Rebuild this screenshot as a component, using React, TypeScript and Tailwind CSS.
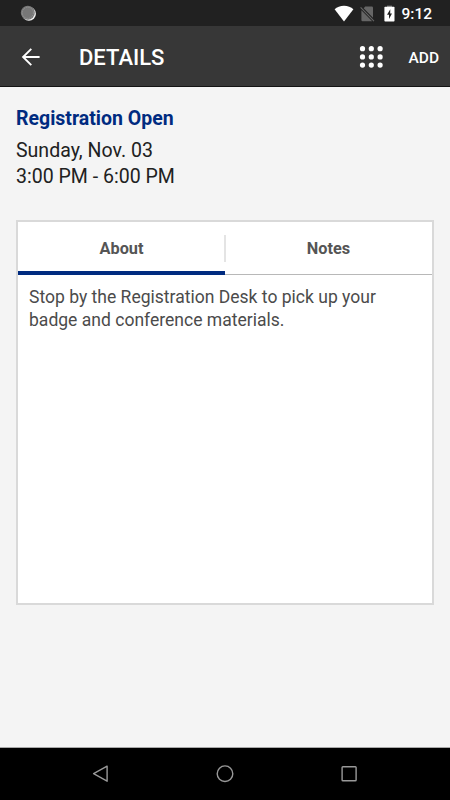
import { useState } from "react"
import clsx from "clsx"

const tabs = ["About", "Notes"];

const StatusBar = () => (
  <div className="flex h-[26px] shrink-0 items-center bg-[#212121] pl-[20px] pr-[18px] text-white">
    <svg width="17" height="17" viewBox="0 0 17 17">
      <circle cx="8.9" cy="8.8" r="7" fill="#f2f2f2" />
      <circle cx="7.8" cy="7.8" r="7" fill="#777777" />
      <circle cx="7.8" cy="7.8" r="5.6" fill="none" stroke="#a0a0a0" strokeWidth="1" strokeDasharray="1 1.2" />
    </svg>
    <div className="ml-auto flex items-center">
      <svg width="20" height="17" viewBox="0 0 20 17" className="mr-[6px]">
        <path d="M10 16.4 0.6 4.2C3 2 6.3 0.7 10 0.7S17 2 19.4 4.2Z" fill="#fff" />
      </svg>
      <svg width="15" height="17" viewBox="0 0 15 17" className="mr-[9px]">
        <path d="M5.2 1.6H11.9Q13 1.6 13 2.7V12.7L3.7 3.2ZM1.4 5.2 12.2 16.2H2.6Q1.4 16.2 1.4 15Z" fill="#666" />
        <path d="M0.6 2.3 14 16.1" stroke="#666" strokeWidth="1.1" />
      </svg>
      <svg width="11" height="17" viewBox="0 0 11 17" className="mr-[6px]">
        <path d="M3 0.6H8V2H3Z" fill="#777" />
        <path d="M1.2 1.8H9.8Q10.5 1.8 10.5 2.6V15.7Q10.5 16.5 9.8 16.5H1.2Q0.4 16.5 0.4 15.7V2.6Q0.4 1.8 1.2 1.8Z" fill="#fff" />
        <path d="M6.3 4.2 3 9.8H5V14L8 8.5H6.2Z" fill="#212121" />
      </svg>
      <span className="mt-[2px] whitespace-nowrap text-[15.5px] leading-5 font-medium">9:12</span>
    </div>
  </div>
);

const AppBar = () => (
  <header className="flex h-[61px] shrink-0 items-center border-b border-[#141414] bg-[#373737] pl-[21px] pr-[11px] text-white">
    <button type="button" aria-label="Back">
      <svg width="20" height="20" viewBox="0 0 20 20" fill="none" stroke="#fff" strokeWidth="1.9" className="block">
        <path d="M10.3 2.9 2.1 11 10.3 19.1M2.1 11H18.6" />
      </svg>
    </button>
    <h1 className="ml-[38px] mt-[4px] whitespace-nowrap text-[22px] leading-7 font-medium">DETAILS</h1>
    <button type="button" aria-label="Menu" className="ml-auto mr-[25px]">
      <svg width="24" height="24" viewBox="0 0 24 24" fill="#fff" className="block">
        {[4.7, 12.9, 21.1].map((y) =>
          [3.5, 12.3, 21.1].map((x) => <circle key={`${x}-${y}`} cx={x} cy={y} r="2.6" />)
        )}
      </svg>
    </button>
    <button type="button" className="mt-[3px] text-[15.5px] leading-5 font-medium">ADD</button>
  </header>
);

const NavBar = () => (
  <nav className="flex h-[53px] shrink-0 items-center justify-between border-t border-[#a8a8a8] bg-black pl-[92px] pr-[92px]">
    <svg width="18" height="18" viewBox="0 0 18 18" fill="none" stroke="#999" strokeWidth="1.4" strokeLinejoin="round">
      <path d="M15.1 1.2V16.2L1.6 8.7Z" />
    </svg>
    <svg width="18" height="18" viewBox="0 0 18 18" fill="none" stroke="#999" strokeWidth="1.4">
      <circle cx="9" cy="8.7" r="7.8" />
    </svg>
    <svg width="18" height="18" viewBox="0 0 18 18" fill="none" stroke="#999" strokeWidth="1.4">
      <rect x="2.1" y="1.8" width="14" height="14" rx="0.8" />
    </svg>
  </nav>
);

const App = () => {
  const [activeTab, setActiveTab] = useState("About");

  return (
    <div className="flex h-[800px] w-[450px] flex-col overflow-hidden bg-[#f4f4f4] font-['Roboto',sans-serif]">
      <StatusBar />
      <AppBar />

      <main className="flex-1 px-4 pt-[19px]">
        <h2 className="whitespace-nowrap text-[19.5px] leading-[26px] font-bold text-[#002b80]">Registration Open</h2>
        <div className="mt-[6px] whitespace-nowrap text-[19.55px] leading-[26px] text-[#212121]">
          <p>Sunday, Nov. 03</p>
          <p>3:00 PM - 6:00 PM</p>
        </div>

        <section className="mt-[30px] h-[385px] border-2 border-[#d9d9d9] bg-white">
          {/* tabs */}
          <div className="relative flex h-[53px]">
            {tabs.map((tab) => (
              <button
                key={tab}
                type="button"
                onClick={() => setActiveTab(tab)}
                className={clsx(
                  "h-[53px] flex-1 text-[16.3px] leading-6 font-bold text-[#555]",
                  activeTab === tab
                    ? "border-b-4 border-[#002b80] pt-[5px]"
                    : "border-b border-[#b8b8b8] pt-[2px]"
                )}
              >
                {tab}
              </button>
            ))}
            <span className="absolute left-1/2 top-[13px] h-[27px] w-[2px] -translate-x-px bg-[#e4e4e4]" />
          </div>

          <div className="whitespace-nowrap px-[11px] pt-[11px] text-[17.55px] leading-[22.5px] text-[#4b4b4b]">
            {activeTab === "About" && (
              <p>
                Stop by the Registration Desk to pick up your
                <br />
                badge and conference materials.
              </p>
            )}
          </div>
        </section>
      </main>

      <NavBar />
    </div>
  )
}

export default App
